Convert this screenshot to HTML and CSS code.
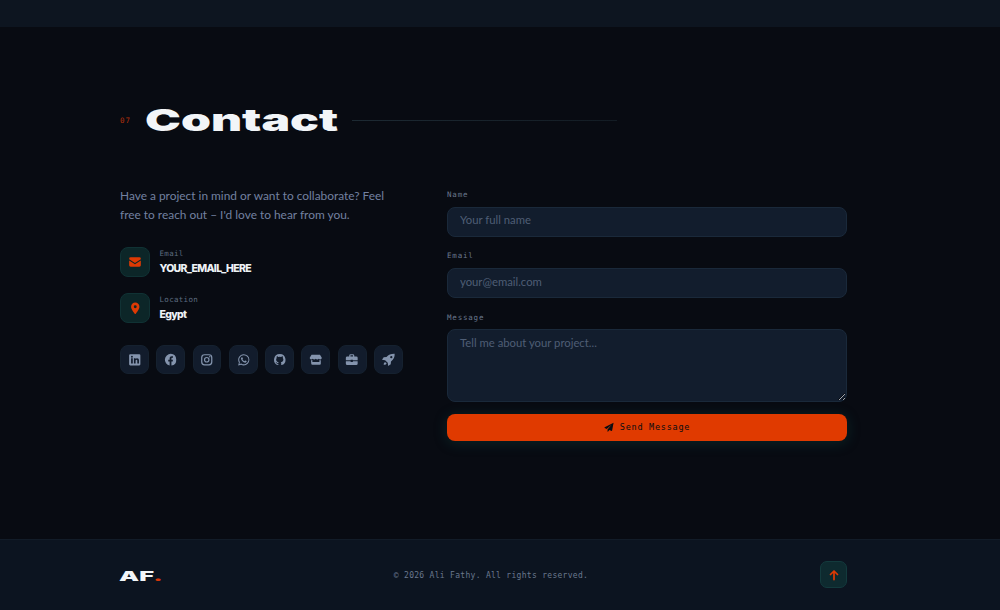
FILE: index.html
```html
<!DOCTYPE html>
<html lang="en">
<head>
<meta charset="utf-8">
<title>Contact</title>
<link rel="stylesheet" href="styles.css">
</head>
<body>
<div class="topband"></div>
<main class="contact">
  <header class="section-head">
    <span class="section-num">07</span>
    <h2 class="section-title">Contact</h2>
    <span class="section-line"></span>
  </header>
  <div class="columns">
    <div class="info">
      <p class="intro">Have a project in mind or want to collaborate? Feel free to reach out – I'd love to hear from you.</p>
      <div class="detail">
        <span class="detail-icon"><svg viewBox="0 0 24 24" class="ic ic-mail"><path d="M2 6.500A2.500 2.500 0 0 1 4.500 4h15A2.500 2.500 0 0 1 22 6.500v.6l-10 6.400L2 7.100zM2 9.500l10 6.300 10-6.300v8A2.500 2.500 0 0 1 19.500 20h-15A2.500 2.500 0 0 1 2 17.500z"/></svg></span>
        <div><div class="detail-label">Email</div><div class="detail-value">YOUR_EMAIL_HERE</div></div>
      </div>
      <div class="detail">
        <span class="detail-icon"><svg viewBox="0 0 24 24" class="ic"><path fill-rule="evenodd" d="M12 1a8 8 0 0 1 8 8c0 4.500-5.500 11.500-7 13.500a1.300 1.300 0 0 1-2 0C9.500 20.500 4 13.500 4 9a8 8 0 0 1 8-8zm0 5.200a2.800 2.800 0 1 0 0 5.600 2.800 2.800 0 0 0 0-5.600z"/></svg></span>
        <div><div class="detail-label">Location</div><div class="detail-value">Egypt</div></div>
      </div>
      <div class="socials">
        <a class="social"><svg viewBox="0 0 24 24" class="si"><path fill-rule="evenodd" d="M4 2h16a2 2 0 0 1 2 2v16a2 2 0 0 1-2 2H4a2 2 0 0 1-2-2V4a2 2 0 0 1 2-2zm1.500 7.500V18.500h3V9.500zM7 5a1.700 1.700 0 1 0 0 3.400A1.700 1.700 0 0 0 7 5zm3.500 4.500v9h3v-4.700c0-1.300.5-2 1.500-2s1.500.7 1.500 2v4.700h3V13c0-2.500-1.300-3.800-3.300-3.800-1.300 0-2.200.6-2.700 1.400V9.500z"/></svg></a>
        <a class="social"><svg viewBox="0 0 24 24" class="si"><path d="M12 1.500a10.500 10.500 0 0 0-2 20.800v-7.300H7.500V12H10V9.800c0-2.600 1.500-4 3.800-4 1.100 0 2.200.2 2.200.2v2.500h-1.200c-1.200 0-1.600.8-1.600 1.600V12h2.700l-.4 3h-2.300v7.300A10.500 10.500 0 0 0 12 1.500z"/></svg></a>
        <a class="social"><svg viewBox="0 0 24 24" class="si"><path fill-rule="evenodd" d="M8 2h8a6 6 0 0 1 6 6v8a6 6 0 0 1-6 6H8a6 6 0 0 1-6-6V8a6 6 0 0 1 6-6zm0 2.200A3.800 3.800 0 0 0 4.200 8v8A3.800 3.800 0 0 0 8 19.800h8a3.800 3.800 0 0 0 3.800-3.800V8A3.800 3.800 0 0 0 16 4.200zM12 7a5 5 0 1 1 0 10 5 5 0 0 1 0-10zm0 2.100a2.900 2.900 0 1 0 0 5.800 2.900 2.900 0 0 0 0-5.800zM17.300 5.500a1.200 1.200 0 1 1 0 2.400 1.200 1.200 0 0 1 0-2.400z"/></svg></a>
        <a class="social"><svg viewBox="0 0 24 24" class="si"><path fill-rule="evenodd" d="M12 2a10 10 0 0 1 0 20c-1.700 0-3.300-.4-4.800-1.200L2 22l1.400-5.100A10 10 0 0 1 12 2zm0 2a8 8 0 0 0-6.800 12.200l-.8 3.200 3.300-.9A8 8 0 1 0 12 4zM8.800 7.500c.5 0 .7.100.9.600l.8 1.800c.1.300 0 .6-.2.800l-.6.800c.8 1.500 2 2.500 3.500 3.200l.8-1c.2-.2.500-.3.800-.2l1.900.9c.4.200.5.500.4.900-.2 1.300-1.300 2-2.500 2-3.600-.3-7.100-3.700-7.500-7 0-1.300.6-2.800 1.700-2.800z"/></svg></a>
        <a class="social"><svg viewBox="0 0 24 24" class="si"><path d="M12 2a10 10 0 0 0-3.200 19.500c.5.100.7-.2.700-.5v-1.800c-2.800.6-3.400-1.300-3.400-1.300-.5-1.200-1.100-1.500-1.100-1.500-.9-.6.100-.6.100-.6 1 .1 1.500 1 1.500 1 .9 1.500 2.300 1.100 2.900.8.100-.6.300-1.100.6-1.300-2.200-.3-4.500-1.100-4.500-4.900 0-1.100.4-2 1-2.700-.1-.3-.4-1.300.1-2.700 0 0 .8-.3 2.800 1a9.500 9.500 0 0 1 5 0c1.900-1.300 2.800-1 2.800-1 .5 1.400.2 2.400.1 2.700.6.700 1 1.600 1 2.700 0 3.800-2.300 4.600-4.500 4.900.4.300.7.900.7 1.900V21c0 .3.200.6.700.5A10 10 0 0 0 12 2z"/></svg></a>
        <a class="social"><svg viewBox="0 0 24 24" class="si"><path fill-rule="evenodd" d="M4.500 3h15L22.500 8c.5 1.700-.6 3.400-2.500 3.400-1.100 0-2-.5-2.600-1.300-.6.800-1.500 1.300-2.700 1.300-1.100 0-2.100-.5-2.700-1.300-.6.800-1.600 1.300-2.700 1.300s-2.100-.5-2.700-1.300C5.900 10.900 5 11.400 4 11.400 2.100 11.400 1 9.700 1.500 8zM3.500 12.800c.2 0 .4.100.6.100.7 0 1.300-.2 1.900-.5V16h12.500v-3.600c.6.300 1.200.5 1.900.5.200 0 .4-.1.600-.1V19a2 2 0 0 1-2 2h-13a2 2 0 0 1-2-2z"/></svg></a>
        <a class="social"><svg viewBox="0 0 24 24" class="si"><path fill-rule="evenodd" d="M10 2h4a2.500 2.500 0 0 1 2.500 2.500V6H20a2.500 2.500 0 0 1 2.500 2.500V13h-8.500v-1h-4v1H1.500V8.500A2.500 2.500 0 0 1 4 6h3.500V4.500A2.500 2.500 0 0 1 10 2zm0 2.200a.4.400 0 0 0-.3.300V6h4.600V4.500a.4.400 0 0 0-.3-.3zM1.500 14.500H10V16h4v-1.500h8.500V19a2.500 2.500 0 0 1-2.500 2.500H4A2.500 2.500 0 0 1 1.500 19z"/></svg></a>
        <a class="social"><svg viewBox="0 0 24 24" class="si"><path fill-rule="evenodd" d="M22.500 1.500c.3 5.500-1.500 10-6.500 13.500l-.5 5-4.500 3-.8-5.500-4.700-4.700-5.500-.8 3-4.500 5-.5C11.500 2.900 17 1.200 22.500 1.500zM16.500 5.500a2 2 0 1 0 0 4 2 2 0 0 0 0-4zM5.500 16.500c1.500.2 2.300 1 2.500 2.500-1 1.500-3 2-5 2 0-2 .5-4 2.500-4.500z"/></svg></a>
      </div>
    </div>
    <form class="form">
      <label class="field"><span class="field-label">Name</span><input class="input" type="text" placeholder="Your full name"></label>
      <label class="field"><span class="field-label">Email</span><input class="input" type="email" placeholder="your@email.com"></label>
      <label class="field"><span class="field-label">Message</span><textarea class="input textarea" placeholder="Tell me about your project..."></textarea></label>
      <button class="send" type="button"><svg viewBox="0 0 24 24" class="send-ic"><path d="M23 1.500 19.500 20.500c-.1.700-.9 1.100-1.500.8l-5-2.200-3 3.900c-.5.600-1.500.3-1.500-.5v-4.500L18.500 6 6.500 16.500 1.700 14.400c-.8-.4-.9-1.500-.1-1.900z"/></svg>Send Message</button>
    </form>
  </div>
</main>
<footer class="footer">
  <div class="logo"><span class="logo-text">AF<span class="logo-dot">.</span></span></div>
  <p class="copy">© 2026 Ali Fathy. All rights reserved.</p>
  <a class="top-btn"><svg viewBox="0 0 24 24" class="top-ic"><path d="M12 21V4M5 11l7-7 7 7"/></svg></a>
</footer>
</body>
</html>
```

FILE: styles.css
```css
* { box-sizing: border-box; }
html, body { margin: 0; padding: 0; }
body {
  width: 1000px;
  height: 610px;
  overflow: hidden;
  background: #080b12;
  font-family: "Lato", "Liberation Sans", sans-serif;
  display: flex;
  flex-direction: column;
}
.topband { height: 27px; background: #0d1520; flex: none; }
.contact { flex: 1; padding: 76px 153px 0 120px; }
.section-head { display: flex; align-items: center; height: 34px; }
.section-num {
  font-family: "DejaVu Sans Mono", monospace;
  font-size: 7.500px;
  letter-spacing: .9px;
  color: #b8320c;
  width: 25px;
}
.section-title {
  margin: 0;
  width: 207px;
  font-family: "Inter", sans-serif;
  font-weight: 900;
  font-size: 30px;
  line-height: 34px;
  color: #f2f5f8;
  transform: scaleX(1.6);
  transform-origin: left center;
}
.section-line {
  width: 265px;
  height: 1px;
  background: linear-gradient(90deg, #1d2a33, #131c24);
}
.columns {
  display: grid;
  grid-template-columns: 283px 400px;
  column-gap: 44px;
  margin-top: 50px;
}
.intro {
  margin: 0 0 23px;
  font-size: 11.900px;
  line-height: 18.500px;
  color: #7381a0;
}
.detail { display: flex; align-items: center; gap: 9.500px; margin-bottom: 16px; height: 30px; }
.detail-icon {
  width: 30px; height: 30px;
  border-radius: 8px;
  background: #0c2628;
  border: 1px solid #103234;
  display: flex; align-items: center; justify-content: center;
  flex: none;
}
.ic { width: 12.500px; height: 12.500px; fill: #dd3a04; }
.ic-mail { width: 14px; height: 14px; }
.detail-label {
  font-family: "DejaVu Sans Mono", monospace;
  font-size: 7.500px;
  letter-spacing: .3px;
  line-height: 10px;
  color: #5d6b80;
}
.detail-value {
  font-family: "Inter", sans-serif;
  font-weight: 800;
  font-size: 10.500px;
  letter-spacing: -.7px;
  line-height: 14px;
  margin-top: 3px;
  color: #eef2f6;
}
.socials { display: flex; gap: 7.500px; margin-top: 22px; }
.social {
  width: 28.800px; height: 28.800px;
  border-radius: 8px;
  background: #121c2c;
  border: 1px solid #15212f;
  display: flex; align-items: center; justify-content: center;
}
.si { width: 13.500px; height: 13.500px; fill: #8494ad; }
.form { display: flex; flex-direction: column; gap: 14.300px; margin-top: 3px; }
.field { display: flex; flex-direction: column; gap: 6.500px; }
.field-label {
  font-family: "DejaVu Sans Mono", monospace;
  font-size: 7.500px;
  letter-spacing: .8px;
  line-height: 10px;
  color: #6a788e;
}
.input {
  display: block;
  width: 100%;
  height: 30.500px;
  padding: 0 12px 4px;
  border-radius: 8px;
  background: #121d2d;
  border: 1px solid #1a293a;
  color: #cfd8e3;
  font-family: "Lato", sans-serif;
  font-size: 11.300px;
  outline: none;
}
.input::placeholder { color: #4f5e75; opacity: 1; }
.textarea { height: 72.500px; padding: 6px 12px; resize: vertical; line-height: 14px; }
.send {
  height: 27px;
  border: 0;
  border-radius: 8px;
  background: #e03a00;
  box-shadow: 0 2px 14px rgba(20, 110, 100, .25);
  color: #0a0d12;
  font-family: "DejaVu Sans Mono", monospace;
  font-size: 8.500px;
  letter-spacing: .75px;
  display: flex; align-items: center; justify-content: center;
  gap: 6px;
  margin-top: -2px;
}
.send-ic { width: 10px; height: 10px; fill: #0a0d12; }
.footer {
  height: 71px;
  flex: none;
  background: #0c1420;
  border-top: 1px solid #121c28;
  padding: 0 153px 0 120px;
  display: flex; align-items: center; justify-content: space-between;
}
.logo { width: 43px; margin-top: -2px; margin-left: -1px; }
.logo-text {
  display: inline-block;
  font-family: "Inter", sans-serif;
  font-weight: 900;
  font-size: 13px;
  color: #f2f5f8;
  transform: scaleX(1.95);
  transform-origin: left center;
}
.logo-dot { color: #d8380a; }
.copy {
  margin: 0;
  font-family: "DejaVu Sans Mono", monospace;
  font-size: 8px;
  letter-spacing: .3px;
  color: #6a788e;
}
.top-btn {
  width: 27px; height: 27px;
  margin-top: -1px;
  border-radius: 7px;
  background: #0e2a2f;
  border: 1px solid #133a3d;
  display: flex; align-items: center; justify-content: center;
}
.top-ic { width: 12px; height: 12px; fill: none; stroke: #dd3a04; stroke-width: 3.500; stroke-linecap: round; stroke-linejoin: round; }
```
